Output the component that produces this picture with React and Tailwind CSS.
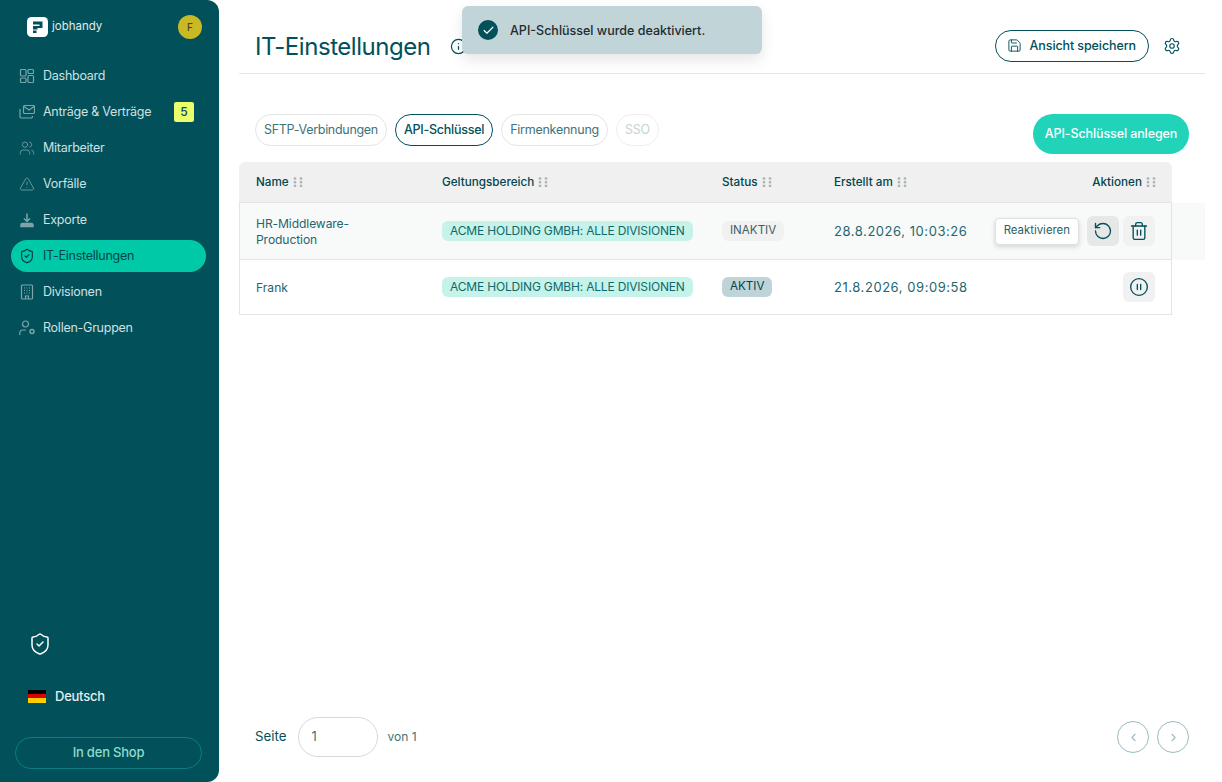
import React from "react";
import { Info, Check, Save, Settings, RotateCcw, Trash2, CirclePause, ChevronLeft, ChevronRight, ShieldCheck, Users, TriangleAlert } from "lucide-react";

const font = "font-['Inter','Noto_Sans',sans-serif]";

const Dash = () => (
  <svg width="16" height="16" viewBox="0 0 16 16" fill="none" stroke="currentColor" strokeWidth="1.2">
    <rect x="1.5" y="1.5" width="5.5" height="6.5" rx="1" /><rect x="9" y="1.5" width="5.5" height="4" rx="1" />
    <rect x="1.5" y="10" width="5.5" height="4.5" rx="1" /><rect x="9" y="7.5" width="5.5" height="7" rx="1" />
  </svg>
);
const Mail = () => (
  <svg width="16" height="16" viewBox="0 0 16 16" fill="none" stroke="currentColor" strokeWidth="1.2">
    <rect x="4.5" y="1.5" width="11" height="8" rx="1.2" /><path d="M4.8 2.5 10 6l5.2-3.5" />
    <path d="M1 5v7.5A1.5 1.5 0 0 0 2.500 14h9.500A1.500 1.500 0 0 0 13.500 12.500V12" />
  </svg>
);
const Tray = () => (
  <svg width="16" height="16" viewBox="0 0 16 16" fill="none" stroke="currentColor" strokeWidth="1.5">
    <path d="M8 1.500v8M5 6.500l3 3 3-3" /><path d="M2 14.500v-1.500a1.500 1.500 0 0 1 1.500-1.500h9a1.500 1.500 0 0 1 1.500 1.500v1.500z" fill="currentColor" />
  </svg>
);
const Office = () => (
  <svg width="16" height="16" viewBox="0 0 16 16" fill="none" stroke="currentColor" strokeWidth="1.2">
    <rect x="2.500" y="1" width="11" height="14" rx="1" /><path d="M6.500 15v-3h3v3" />
    <path d="M5 4h1M7.500 4h1M10 4h1M5 6.500h1M7.500 6.500h1M10 6.500h1M5 9h1M7.500 9h1M10 9h1" strokeWidth="1.200" />
  </svg>
);
const Role = () => (
  <svg width="16" height="16" viewBox="0 0 16 16" fill="none" stroke="currentColor" strokeWidth="1.2">
    <circle cx="6.500" cy="4" r="3" /><path d="M0.800 15v-2a3 3 0 0 1 3-3H7" /><circle cx="13" cy="11.500" r="2" strokeWidth="1.500" />
  </svg>
);
const Grip = () => (
  <svg width="10" height="10" viewBox="0 0 10 10" className="text-[#aab4b6]" fill="currentColor">
    {[0.3, 4, 7.7].map((y) => [0.8, 6.8].map((x) => <rect key={x + "-" + y} x={x} y={y} width="2.400" height="2.400" />))}
  </svg>
);
const Logo = () => (
  <svg width="21" height="20" viewBox="0 0 21 20">
    <rect width="21" height="20" rx="4.500" fill="#fff" />
    <path d="M6 4.500h9.500v6.500h-5v1.500H6V9h6.500V7.500H6z M6 13.500h3.500V16H6z" fill="#01505a" />
  </svg>
);

const nav = [
  ["Dashboard", <Dash />],
  ["Anträge & Verträge", <Mail />, "5"],
  ["Mitarbeiter", <Users size={18} strokeWidth={1.200} />],
  ["Vorfälle", <TriangleAlert size={18} strokeWidth={1.200} />],
  ["Exporte", <Tray />],
  ["IT-Einstellungen", <ShieldCheck size={18} strokeWidth={1.700} />, null, true],
  ["Divisionen", <Office />],
  ["Rollen-Gruppen", <Role />],
];

function Sidebar() {
  return (
    <aside className="w-[219px] h-full shrink-0 bg-[#01505a] rounded-r-[12px] flex flex-col pl-[11px] pr-[13px]">
      <div className="h-[52px] pl-[16px] pr-[4px] pt-[2px] flex items-center justify-between">
        <div className="flex items-center gap-[4px]">
          <Logo />
          <span className="text-[11.500px] text-[#e1ecec]">jobhandy</span>
        </div>
        <div className="w-[24px] h-[24px] rounded-full bg-[#c9b924] text-[#5a3b2a] text-[10px] font-medium flex items-center justify-center">F</div>
      </div>
      <nav className="mt-[6px] flex flex-col">
        {nav.map(([label, icon, badge, active]) => (
          <div key={label} className={"flex items-center rounded-[16px] pl-[8px] pr-[12px] gap-[8px] " + (active ? "h-[32px] my-[2px] bg-[#00c9a7] text-[#01454e]" : "h-[36px] text-[#cfe0e1]")}>
            <span className={"w-[16px] flex justify-center " + (active ? "text-[#013c44]" : "text-[#7da5a9]")}>{icon}</span>
            <span className="text-[12.500px] tracking-[-0.25px] flex-1">{label}</span>
            {badge && <span className="w-[20px] h-[20px] rounded-[2px] bg-[#eaff6b] text-[#01505a] text-[12px] font-medium flex items-center justify-center">{badge}</span>}
          </div>
        ))}
      </nav>
      <div className="flex-1" />
      <div className="pl-[17px] text-white"><ShieldCheck size={24} strokeWidth={1.500} /></div>
      <div className="mt-[31px] pl-[17px] flex items-center gap-[9px]">
        <div className="w-[18px] h-[13px] flex flex-col">
          <div className="flex-1 bg-black" /><div className="flex-1 bg-[#dd0000]" /><div className="flex-1 bg-[#ffce00]" />
        </div>
        <span className="text-[13px] font-medium text-[#e3eeee] tracking-[-0.25px]">Deutsch</span>
      </div>
      <button className="mt-[31px] mb-[13px] mx-[4px] h-[32px] rounded-full border border-[#0b7e80] text-[13px] font-medium text-[#8fdccb] tracking-[-0.2px]">In den Shop</button>
    </aside>
  );
}

const Tab = ({ children, active, disabled, tight }) => (
  <div className={"h-[32px] px-[8px] rounded-full border text-[12.500px] flex items-center " +
    (tight ? "tracking-[-0.3px] " : "tracking-[-0.25px] ") +
    (active ? "border-[#01505a] text-[#01505a] font-medium" : disabled ? "border-[#efefef] text-[#c7d3d5]" : "border-[#e4e4e4] text-[#3e7379]")}>
    {children}
  </div>
);

const Head = ({ children, className = "" }) => (
  <div className={"flex items-center gap-[4px] text-[11.700px] font-medium text-[#01454e] pt-[1px] " + className}>
    {children}<Grip />
  </div>
);

const Scope = () => (
  <span className="h-[20px] px-[8px] rounded-[6px] bg-[#c5f3ea] text-[#11686a] text-[12px] tracking-[-0.18px] flex items-center w-fit whitespace-nowrap">ACME HOLDING GMBH: ALLE DIVISIONEN</span>
);

const IconBtn = ({ children, dark }) => (
  <button className={"w-[32px] h-[30px] rounded-[6px] flex items-center justify-center text-[#01505a] " + (dark ? "bg-[#e6e7e7]" : "bg-[#f1f1f1]")}>{children}</button>
);

const cols = "grid grid-cols-[186px_280px_112px_1fr] items-center pl-[16px]";

function Table() {
  return (
    <div className="mt-[8px]">
      <div className={cols + " w-[933px] h-[41px] bg-[#f0f0f0] rounded-t-[6px] border-b border-[#e4e4e4] pl-[17px] pr-[16px]"}>
        <Head>Name</Head>
        <Head>Geltungsbereich</Head>
        <Head>Status</Head>
        <div className="flex items-center justify-between">
          <Head>Erstellt am</Head>
          <Head>Aktionen</Head>
        </div>
      </div>
      <div className="flex w-[966px] h-[57px] bg-[#f8faf9]">
        <div className={cols + " w-[933px] border-x border-b border-[#e4e4e4] pr-[16px] text-[13px] text-[#1f6670]"}>
          <div className="text-[12.100px] leading-[16px] tracking-[-0.1px] pt-[2px]">HR-Middleware-<br />Production</div>
          <div><Scope /></div>
          <div><span className="h-[20px] px-[8px] rounded-[6px] bg-[#f1f1f1] text-[#3f5f65] text-[11.600px] flex items-center w-fit">INAKTIV</span></div>
          <div className="flex items-center">
            <span className="tracking-[0.55px] whitespace-nowrap pt-[2px]">28.8.2026, 10:03:26</span>
            <div className="ml-auto flex items-center">
              <span className="h-[27px] px-[8px] rounded-[4px] bg-white border border-[#e0e0e0] shadow-[0_2px_5px_rgba(0,0,0,0.15)] text-[11.400px] text-[#2a5f66] flex items-center mr-[8px]">Reaktivieren</span>
              <IconBtn dark><RotateCcw size={20} strokeWidth={1.600} /></IconBtn>
              <span className="w-[4px]" />
              <IconBtn><Trash2 size={20} strokeWidth={1.600} /></IconBtn>
            </div>
          </div>
        </div>
      </div>
      <div className={cols + " w-[933px] h-[55px] border-x border-b border-[#e4e4e4] pr-[16px] text-[13px] text-[#1f6670]"}>
        <div className="text-[12.100px] pt-[2px]">Frank</div>
        <div><Scope /></div>
        <div><span className="h-[20px] px-[8px] rounded-[6px] bg-[#bfd4d8] text-[#01454e] text-[11.600px] flex items-center w-fit">AKTIV</span></div>
        <div className="flex items-center">
          <span className="tracking-[0.55px] whitespace-nowrap pt-[2px]">21.8.2026, 09:09:58</span>
          <div className="ml-auto"><IconBtn><CirclePause size={20} strokeWidth={1.600} /></IconBtn></div>
        </div>
      </div>
    </div>
  );
}

function Main() {
  return (
    <main className="relative w-[986px] h-full pl-[20px] flex flex-col">
      <header className="h-[74px] shrink-0 border-b border-[#e8e8e8] pl-[16px] pr-[24px] pt-[20px] flex items-center">
        <h1 className="text-[24px] font-normal tracking-[-0.45px] text-[#01505a]">IT-Einstellungen</h1>
        <Info size={17} strokeWidth={1.700} className="ml-[19px] text-[#01505a]" />
        <div className="ml-auto flex items-center gap-[14px] -mt-[2px]">
          <button className="h-[32px] pl-[11px] pr-[12px] rounded-full border border-[#01505a] text-[12.500px] font-medium text-[#01505a] tracking-[-0.1px] flex items-center gap-[8px]">
            <Save size={15} strokeWidth={1.500} /><span className="pt-[2px]">Ansicht speichern</span>
          </button>
          <Settings size={18} strokeWidth={1.500} className="text-[#01505a]" />
        </div>
      </header>
      <div className="pt-[40px] flex items-start justify-between pr-[16px] pl-[16px]">
        <div className="flex gap-[8px]">
          <Tab tight>SFTP-Verbindungen</Tab>
          <Tab active>API-Schlüssel</Tab>
          <Tab>Firmenkennung</Tab>
          <Tab disabled>SSO</Tab>
        </div>
        <button className="h-[40px] w-[156px] rounded-full bg-[#20d3b9] text-white text-[12.500px] font-medium tracking-[-0.1px]">API-Schlüssel anlegen</button>
      </div>
      <Table />
      <div className="flex-1" />
      <footer className="h-[40px] mb-[25px] pl-[16px] pr-[16px] flex items-center">
        <span className="text-[13.300px] text-[#01505a]">Seite</span>
        <div className="ml-[12px] w-[80px] h-[40px] rounded-full border border-[#d9d9d9] flex items-center pl-[12px] text-[13px] text-[#3e7379]">1</div>
        <span className="ml-[9px] text-[12px] text-[#3e7379]">von 1</span>
        <div className="ml-auto flex gap-[8px]">
          <button className="w-[32px] h-[32px] rounded-full border border-[#9bbcc0] text-[#9bbcc0] flex items-center justify-center"><ChevronLeft size={13} /></button>
          <button className="w-[32px] h-[32px] rounded-full border border-[#9bbcc0] text-[#9bbcc0] flex items-center justify-center"><ChevronRight size={13} /></button>
        </div>
      </footer>
      <div className="absolute left-[243px] top-[6px] w-[300px] h-[48px] rounded-[6px] bg-[#c1d4d8] shadow-[0_6px_14px_rgba(0,0,0,0.1)] flex items-center pl-[16px] gap-[12px]">
        <span className="w-[20px] h-[20px] rounded-full bg-[#01505a] text-white flex items-center justify-center"><Check size={13} strokeWidth={2.200} /></span>
        <span className="text-[12.500px] font-medium text-[#1d2b30] pt-[2px]">API-Schlüssel wurde deaktiviert.</span>
      </div>
    </main>
  );
}

export default function App() {
  return (
    <div className={"w-[1222px] h-[782px] flex bg-white overflow-hidden " + font}>
      <Sidebar />
      <Main />
    </div>
  );
}
